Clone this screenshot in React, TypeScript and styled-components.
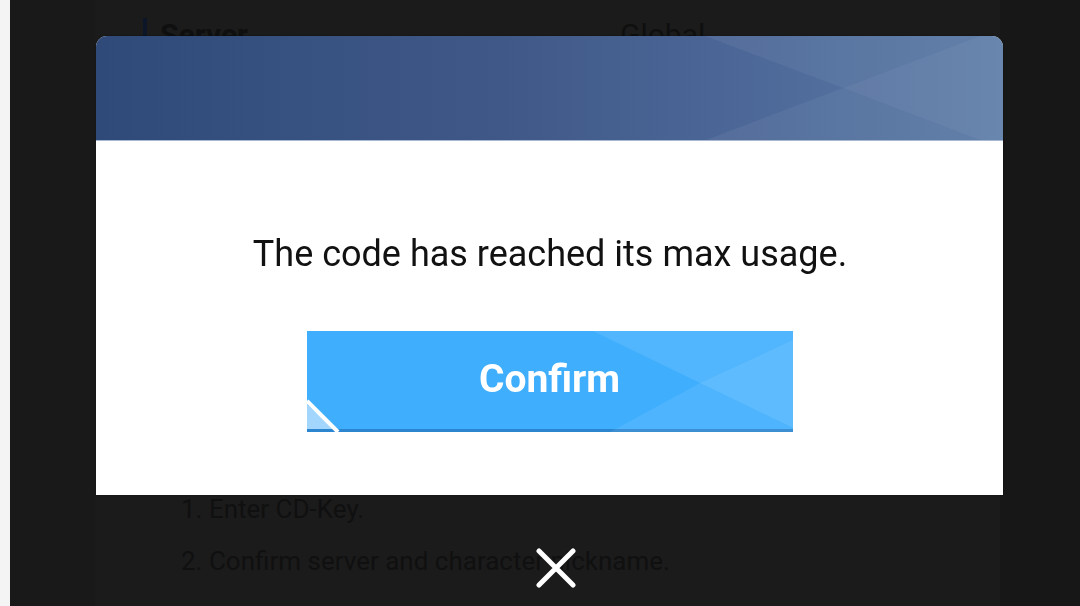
import styled, { createGlobalStyle } from "styled-components";

const GlobalStyle = createGlobalStyle`
  html, body {
    margin: 0;
    padding: 0;
    width: 1080px;
    height: 606px;
    overflow: hidden;
    background: #171717;
    font-family: Roboto, "Liberation Sans", sans-serif;
  }
`;

const App = () => {
  return (
    <>
      <GlobalStyle />
      <Page>
        <WhiteEdge />
        <SideGutter />
        <ContentPanel>
          <ServerRow>
            <ServerLabel>Server</ServerLabel>
            <ServerValue>Global</ServerValue>
          </ServerRow>
          <Steps>
            <Step>1. Enter CD-Key.</Step>
            <Step>2. Confirm server and character nickname.</Step>
          </Steps>
        </ContentPanel>
      </Page>

      <Overlay>
        <Dialog>
          <DialogHeader>
            <HeaderPattern viewBox="0 0 907 104" preserveAspectRatio="none">
              <polygon points="609,0 884,0 747,52" fill="#ffffff" opacity="0.05" />
              <polygon points="610,104 884,104 747,52" fill="#ffffff" opacity="0.05" />
              <polygon points="884,0 907,0 907,104 884,104 747,52" fill="#ffffff" opacity="0.09" />
            </HeaderPattern>
          </DialogHeader>
          <DialogBody>
            <Message>The code has reached its max usage.</Message>
            <ConfirmButton type="button">
              <ButtonPattern viewBox="0 0 486 101" preserveAspectRatio="none">
                <polygon points="286,0 486,0 486,9 393,52" fill="#ffffff" opacity="0.1" />
                <polygon points="303,101 486,101 486,97 393,52" fill="#ffffff" opacity="0.08" />
                <polygon points="486,9 486,97 393,52" fill="#ffffff" opacity="0.17" />
                <polygon points="0,73 0,98 27,98" fill="#a3d6fd" />
                <line x1="0" y1="70" x2="31" y2="101" stroke="#ffffff" strokeWidth="4" />
              </ButtonPattern>
              <ButtonLabel>Confirm</ButtonLabel>
            </ConfirmButton>
          </DialogBody>
        </Dialog>
        <CloseButton type="button" aria-label="Close">
          <svg width="40" height="40" viewBox="0 0 40 40">
            <path
              d="M3 3 L37 37 M37 3 L3 37"
              stroke="#ffffff"
              strokeWidth="5"
              strokeLinecap="round"
              fill="none"
            />
          </svg>
        </CloseButton>
      </Overlay>
    </>
  );
};
export default App;

const Page = styled.div`
  display: flex;
  width: 1080px;
  height: 606px;
`;

const WhiteEdge = styled.div`
  width: 10px;
  background: #f4f4f4;
`;

const SideGutter = styled.div`
  width: 85px;
  background: #191919;
`;

const ContentPanel = styled.div`
  width: 905px;
  background: #1b1b1b;
  display: flex;
  flex-direction: column;
  padding-left: 48px;
  box-sizing: border-box;
`;

const ServerRow = styled.div`
  display: flex;
  align-items: center;
  margin-top: 18px;
`;

const ServerLabel = styled.div`
  width: 460px;
  border-left: 4px solid #0c1628;
  padding-left: 13px;
  font-size: 30px;
  font-weight: 700;
  line-height: 34px;
  color: #0f0f0f;
`;

const ServerValue = styled.div`
  font-size: 30px;
  line-height: 34px;
  color: #0f0f0f;
`;

const Steps = styled.div`
  display: flex;
  flex-direction: column;
  gap: 20px;
  margin-top: 441px;
  padding-left: 38px;
`;

const Step = styled.div`
  font-size: 26px;
  line-height: 32px;
  color: #101010;
  white-space: nowrap;
`;

const Overlay = styled.div`
  position: fixed;
  inset: 0;
  display: flex;
  flex-direction: column;
  align-items: center;
  padding-top: 36px;
  padding-left: 19px;
  box-sizing: border-box;
`;

const Dialog = styled.div`
  width: 907px;
  display: flex;
  flex-direction: column;
  border-radius: 11px 11px 0 0;
  overflow: hidden;
  background: #ffffff;
  box-shadow: 0 0 2px rgba(0, 0, 0, 0.5);
`;

const DialogHeader = styled.div`
  position: relative;
  height: 104px;
  border-bottom: 1px solid #a8b7d2;
  background: linear-gradient(90deg, #2f4a78 0%, #3f5888 45%, #4c6797 70%, #5a7aa6 100%);
`;

const HeaderPattern = styled.svg`
  position: absolute;
  inset: 0;
  width: 100%;
  height: 100%;
`;

const DialogBody = styled.div`
  height: 354px;
  display: flex;
  flex-direction: column;
  align-items: center;
  padding-top: 93px;
  box-sizing: border-box;
  gap: 57px;
`;

const Message = styled.div`
  font-size: 36px;
  line-height: 40px;
  color: #111111;
  padding-left: 1px;
`;

const ConfirmButton = styled.button`
  position: relative;
  width: 486px;
  height: 101px;
  border: none;
  padding: 0;
  background: #3eaefd;
  border-bottom: 3px solid #2b86cf;
  box-sizing: border-box;
  display: flex;
  align-items: center;
  justify-content: center;
  cursor: pointer;
`;

const ButtonPattern = styled.svg`
  position: absolute;
  inset: 0;
  width: 100%;
  height: 101px;
`;

const ButtonLabel = styled.span`
  position: relative;
  font-family: Roboto, "Liberation Sans", sans-serif;
  font-size: 39px;
  font-weight: 700;
  color: #ffffff;
  margin-bottom: 2px;
`;

const CloseButton = styled.button`
  margin-top: 53px;
  margin-left: 12px;
  width: 40px;
  height: 40px;
  padding: 0;
  border: none;
  background: transparent;
  display: flex;
  cursor: pointer;
`;
